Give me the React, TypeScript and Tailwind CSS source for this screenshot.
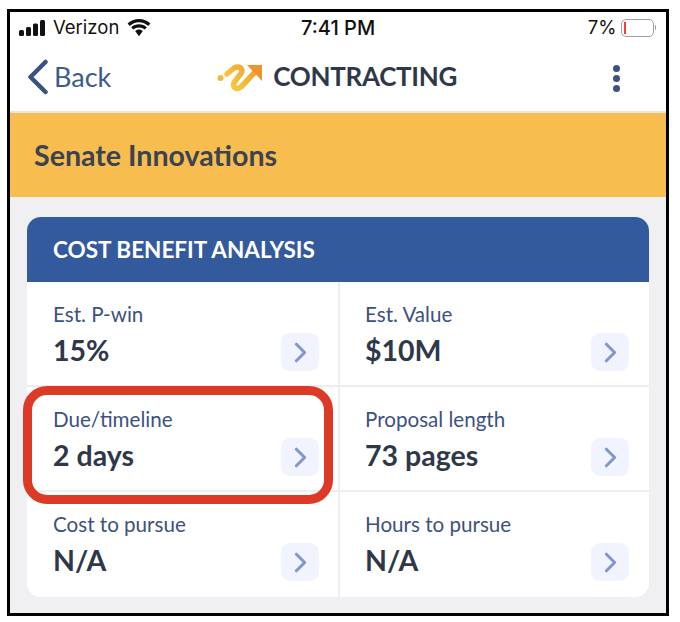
import { ChevronRight } from "lucide-react";

const metrics = [
    { label: "Est. P-win", value: "15%" },
    { label: "Est. Value", value: "$10M" },
    { label: "Due/timeline", value: "2 days" },
    { label: "Proposal length", value: "73 pages" },
    { label: "Cost to pursue", value: "N/A" },
    { label: "Hours to pursue", value: "N/A" },
];

const MetricCell = ({ label, value, index }: { label: string; value: string; index: number }) => {
    const left = index % 2 === 0;
    const last = index >= 4;
    return (
        <div
            className={`relative h-[105px] pt-[19px] flex flex-col ${left ? "pl-[26px] border-r-2 border-r-[#eeeef0]" : "pl-[25px]"} ${last ? "" : "border-b-2 border-b-[#eeeef0]"}`}
        >
            <p className="text-[20.6px] leading-[26px] text-[#3d5180]">{label}</p>
            <p className="mt-[5px] text-[28.5px] leading-[36px] font-bold text-[#2f3849]">{value}</p>
            <div className={`absolute top-[51px] ${left ? "right-[19px]" : "right-[20px]"} w-[38px] h-[38px] rounded-[9px] bg-[#f1f4fe] flex items-center justify-center`}>
                <ChevronRight size={33} strokeWidth={2.3} className="text-[#8098d0]" />
            </div>
        </div>
    );
};

const StatusBar = () => (
    <div className="relative h-[31px] flex items-center justify-between pl-[9px] pr-[10px] font-['Inter',sans-serif] text-[#111] text-[19px]">
        <div className="flex items-center">
            <svg width="27" height="16" viewBox="0 0 27 16" fill="#111">
                <rect x="0" y="10" width="5" height="6" rx="1.5" />
                <rect x="7" y="7" width="5" height="9" rx="1.5" />
                <rect x="14" y="3.5" width="5" height="12.5" rx="1.5" />
                <rect x="21" y="0" width="5" height="16" rx="1.5" />
            </svg>
            <span className="ml-[7px] text-[18.5px]">Verizon</span>
            <svg className="ml-[8px]" width="24" height="18" viewBox="0 0 24 18" fill="#111">
                <path d="M12 3.2c3.6 0 6.8 1.4 9.2 3.7L23.4 4.5C20.4 1.7 16.400 0 12 0S3.600 1.700 .6 4.500l2.200 2.400C5.200 4.600 8.400 3.200 12 3.200z" />
                <path d="M12 8.400c2.200 0 4.200.8 5.700 2.200l2.200-2.400C17.800 6.300 15 5.200 12 5.200S6.200 6.300 4.100 8.200l2.200 2.400c1.500-1.400 3.500-2.200 5.700-2.200z" />
                <path d="M12 10.500c-1.500 0-2.800.6-3.800 1.500L12 17.200l3.800-5.200c-1-.9-2.300-1.500-3.800-1.500z" />
            </svg>
        </div>
        <span className="absolute left-[291px] text-[20px] font-medium">7:41 PM</span>
        <div className="flex items-center">
            <span className="text-[18.5px] ml-[1px]">7%</span>
            <div className="ml-[4px] w-[33px] h-[18px] rounded-[5px] border-[1.5px] border-[#a0a0a0] flex items-center pl-[2px]">
                <div className="w-[2px] h-[12px] bg-[#f0413c]" />
            </div>
            <div className="ml-[1px] w-[1.5px] h-[5px] bg-[#a0a0a0] rounded-r-sm" />
        </div>
    </div>
);

const App = () => {
    return (
        <div className="w-[680px] h-[622px] bg-white pl-[7px] pt-[9px] font-['Lato',sans-serif]">
            <div className="relative w-[662px] h-[607px] border-[3px] border-black bg-[#f0f0f2] flex flex-col overflow-hidden">
                <div className="bg-white h-[101px] border-b-2 border-b-[#e6e6e8] shrink-0">
                    <StatusBar />
                    <div className="relative h-[68px] flex items-center">
                        <svg className="ml-[17px]" width="22" height="36" viewBox="0 0 22 36" fill="none" stroke="#3a5183" strokeWidth="4.500" strokeLinecap="round" strokeLinejoin="round">
                            <path d="M18.500 3 L3.500 18 L18.500 33" />
                        </svg>
                        <span className="ml-[5px] text-[27px] text-[#3d5a8f]">Back</span>
                        <svg className="ml-[106px]" width="46" height="30" viewBox="0 0 46 30" fill="none">
                            <defs>
                                <linearGradient id="logoShaft" gradientUnits="userSpaceOnUse" x1="20" y1="26" x2="45" y2="3">
                                    <stop offset="0" stopColor="#f7c53f" />
                                    <stop offset="1" stopColor="#ee942c" />
                                </linearGradient>
                            </defs>
                            <circle cx="3.500" cy="16" r="3" fill="#f5b93f" />
                            <path d="M10 12 L17 6 Q22 3.500 24.500 7 Q26 10 22 14 L17.500 20 Q15 24 18.500 26 Q21 27.500 24 25 L41 7" stroke="url(#logoShaft)" strokeWidth="5.500" strokeLinecap="round" strokeLinejoin="round" />
                            <path d="M30 3 H45 V19 Z" fill="#ee942c" />
                        </svg>
                        <span className="ml-[10px] -mt-[2px] text-[26px] font-bold tracking-[-0.3px] text-[#2f3849]">CONTRACTING</span>
                        <div className="absolute right-[46px] top-[22px] flex flex-col gap-[3px]">
                            <span className="w-[7px] h-[7px] rounded-full bg-[#3a5183]" />
                            <span className="w-[7px] h-[7px] rounded-full bg-[#3a5183]" />
                            <span className="w-[7px] h-[7px] rounded-full bg-[#3a5183]" />
                        </div>
                    </div>
                </div>
                <div className="h-[84px] shrink-0 bg-[#f8bd4f] flex items-center pl-[24px]">
                    <h1 className="text-[28.6px] font-bold text-[#3b4252]">Senate Innovations</h1>
                </div>
                <div className="mt-[20px] mx-[17px] w-[622px] rounded-[14px] overflow-hidden bg-white shrink-0">
                    <div className="h-[65px] bg-[#345a9e] flex items-center pl-[26px]">
                        <h2 className="text-[22.5px] font-bold text-white">COST BENEFIT ANALYSIS</h2>
                    </div>
                    <div className="grid grid-cols-[313px_309px]">
                        {metrics.map((m, i) => (
                            <MetricCell key={m.label} label={m.label} value={m.value} index={i} />
                        ))}
                    </div>
                </div>
                <div className="absolute left-[13px] top-[374px] w-[310px] h-[118px] rounded-[24px] border-[9px] border-[#dc3a26]" />
            </div>
        </div>
    );
};

export default App;
